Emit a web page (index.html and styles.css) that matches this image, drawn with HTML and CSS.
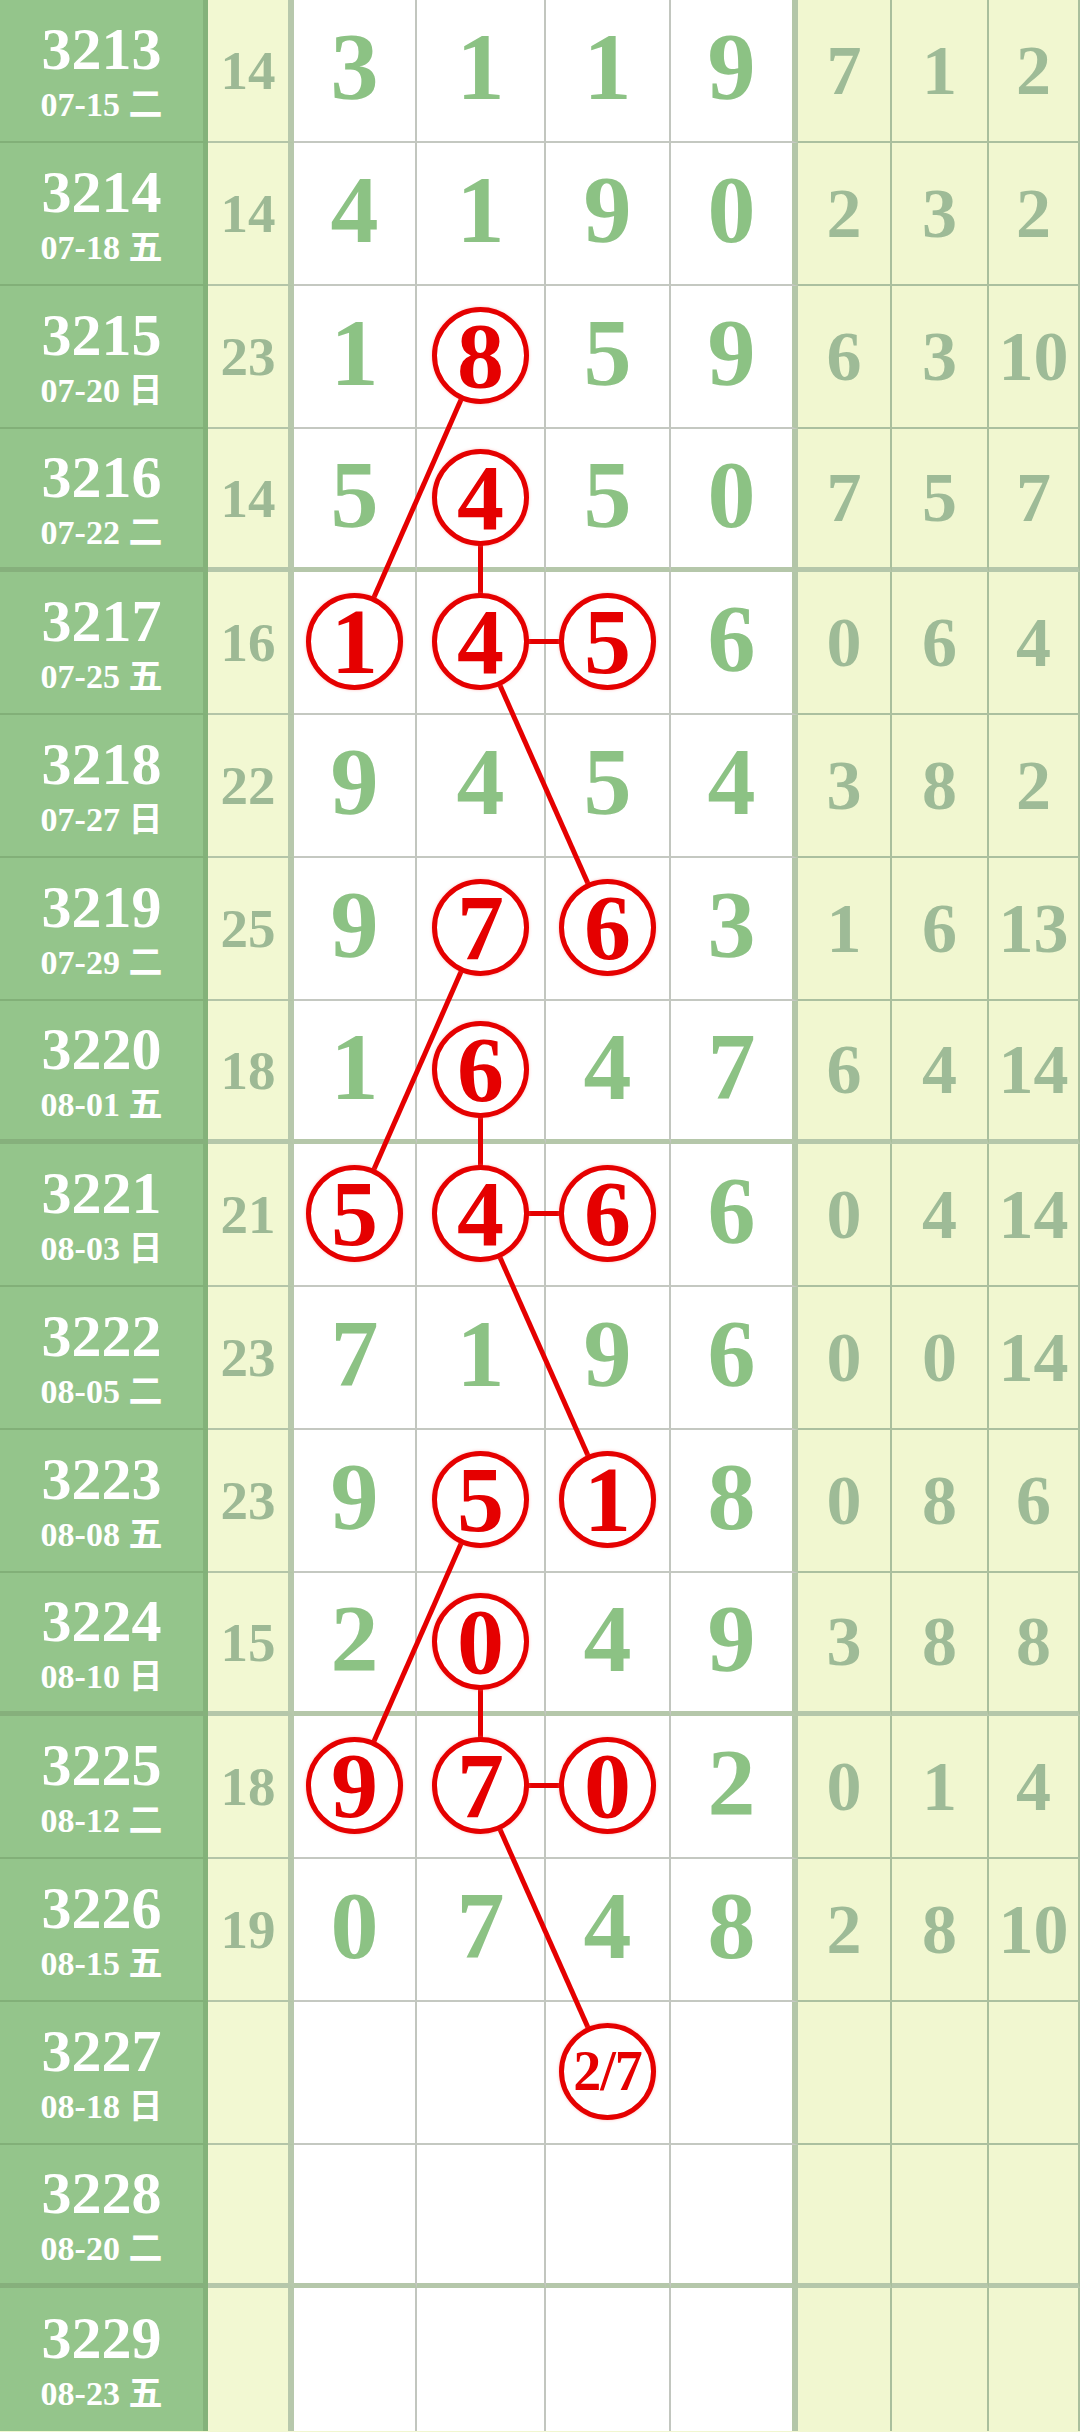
FILE: index.html
```html
<!DOCTYPE html>
<html lang="zh">
  <head>
    <meta charset="UTF-8" />
    <meta name="viewport" content="width=device-width, initial-scale=1.0" />
    <title>走势图</title>
    <link rel="stylesheet" href="styles.css">
  </head>
  <body>
    <div class="chart">
      <svg class="links" width="1080" height="2431" viewBox="0 0 1080 2431">
        <g stroke="#e50000" stroke-width="5" fill="none">
          <line x1="480.5" y1="355.5" x2="354.5" y2="641.5" />
          <line x1="480.5" y1="497" x2="480.5" y2="641.5" />
          <line x1="480.5" y1="641.5" x2="607.5" y2="641.5" />
          <line x1="480.5" y1="641.5" x2="607.5" y2="927.5" />
          <line x1="480.5" y1="927.5" x2="354.5" y2="1213.5" />
          <line x1="480.5" y1="1069" x2="480.5" y2="1213.5" />
          <line x1="480.5" y1="1213.5" x2="607.5" y2="1213.5" />
          <line x1="480.5" y1="1213.5" x2="607.5" y2="1499.5" />
          <line x1="480.5" y1="1499.5" x2="354.5" y2="1785.5" />
          <line x1="480.5" y1="1641" x2="480.5" y2="1785.5" />
          <line x1="480.5" y1="1785.5" x2="607.5" y2="1785.5" />
          <line x1="480.5" y1="1785.5" x2="607.5" y2="2071.5" />
        </g>
      </svg>

      <div class="row">
        <div class="issue"><b>3213</b><span>07-15 二</span></div>
        <div class="sum">14</div>
        <div class="d">3</div><div class="d">1</div><div class="d">1</div><div class="d">9</div>
        <div class="w">7</div><div class="w">1</div><div class="w">2</div>
      </div>
      <div class="row">
        <div class="issue"><b>3214</b><span>07-18 五</span></div>
        <div class="sum">14</div>
        <div class="d">4</div><div class="d">1</div><div class="d">9</div><div class="d">0</div>
        <div class="w">2</div><div class="w">3</div><div class="w">2</div>
      </div>
      <div class="row">
        <div class="issue"><b>3215</b><span>07-20 日</span></div>
        <div class="sum">23</div>
        <div class="d">1</div><div class="d"><span class="ball">8</span></div><div class="d">5</div><div class="d">9</div>
        <div class="w">6</div><div class="w">3</div><div class="w">10</div>
      </div>
      <div class="row row--sep">
        <div class="issue"><b>3216</b><span>07-22 二</span></div>
        <div class="sum">14</div>
        <div class="d">5</div><div class="d"><span class="ball">4</span></div><div class="d">5</div><div class="d">0</div>
        <div class="w">7</div><div class="w">5</div><div class="w">7</div>
      </div>

      <div class="row">
        <div class="issue"><b>3217</b><span>07-25 五</span></div>
        <div class="sum">16</div>
        <div class="d"><span class="ball">1</span></div><div class="d"><span class="ball">4</span></div><div class="d"><span class="ball">5</span></div><div class="d">6</div>
        <div class="w">0</div><div class="w">6</div><div class="w">4</div>
      </div>
      <div class="row">
        <div class="issue"><b>3218</b><span>07-27 日</span></div>
        <div class="sum">22</div>
        <div class="d">9</div><div class="d">4</div><div class="d">5</div><div class="d">4</div>
        <div class="w">3</div><div class="w">8</div><div class="w">2</div>
      </div>
      <div class="row">
        <div class="issue"><b>3219</b><span>07-29 二</span></div>
        <div class="sum">25</div>
        <div class="d">9</div><div class="d"><span class="ball">7</span></div><div class="d"><span class="ball">6</span></div><div class="d">3</div>
        <div class="w">1</div><div class="w">6</div><div class="w">13</div>
      </div>
      <div class="row row--sep">
        <div class="issue"><b>3220</b><span>08-01 五</span></div>
        <div class="sum">18</div>
        <div class="d">1</div><div class="d"><span class="ball">6</span></div><div class="d">4</div><div class="d">7</div>
        <div class="w">6</div><div class="w">4</div><div class="w">14</div>
      </div>

      <div class="row">
        <div class="issue"><b>3221</b><span>08-03 日</span></div>
        <div class="sum">21</div>
        <div class="d"><span class="ball">5</span></div><div class="d"><span class="ball">4</span></div><div class="d"><span class="ball">6</span></div><div class="d">6</div>
        <div class="w">0</div><div class="w">4</div><div class="w">14</div>
      </div>
      <div class="row">
        <div class="issue"><b>3222</b><span>08-05 二</span></div>
        <div class="sum">23</div>
        <div class="d">7</div><div class="d">1</div><div class="d">9</div><div class="d">6</div>
        <div class="w">0</div><div class="w">0</div><div class="w">14</div>
      </div>
      <div class="row">
        <div class="issue"><b>3223</b><span>08-08 五</span></div>
        <div class="sum">23</div>
        <div class="d">9</div><div class="d"><span class="ball">5</span></div><div class="d"><span class="ball">1</span></div><div class="d">8</div>
        <div class="w">0</div><div class="w">8</div><div class="w">6</div>
      </div>
      <div class="row row--sep">
        <div class="issue"><b>3224</b><span>08-10 日</span></div>
        <div class="sum">15</div>
        <div class="d">2</div><div class="d"><span class="ball">0</span></div><div class="d">4</div><div class="d">9</div>
        <div class="w">3</div><div class="w">8</div><div class="w">8</div>
      </div>

      <div class="row">
        <div class="issue"><b>3225</b><span>08-12 二</span></div>
        <div class="sum">18</div>
        <div class="d"><span class="ball">9</span></div><div class="d"><span class="ball">7</span></div><div class="d"><span class="ball">0</span></div><div class="d">2</div>
        <div class="w">0</div><div class="w">1</div><div class="w">4</div>
      </div>
      <div class="row">
        <div class="issue"><b>3226</b><span>08-15 五</span></div>
        <div class="sum">19</div>
        <div class="d">0</div><div class="d">7</div><div class="d">4</div><div class="d">8</div>
        <div class="w">2</div><div class="w">8</div><div class="w">10</div>
      </div>
      <div class="row">
        <div class="issue"><b>3227</b><span>08-18 日</span></div>
        <div class="sum"></div>
        <div class="d"></div><div class="d"></div><div class="d"><span class="ball ball--pair">2/7</span></div><div class="d"></div>
        <div class="w"></div><div class="w"></div><div class="w"></div>
      </div>
      <div class="row row--sep">
        <div class="issue"><b>3228</b><span>08-20 二</span></div>
        <div class="sum"></div>
        <div class="d"></div><div class="d"></div><div class="d"></div><div class="d"></div>
        <div class="w"></div><div class="w"></div><div class="w"></div>
      </div>

      <div class="row row--last">
        <div class="issue"><b>3229</b><span>08-23 五</span></div>
        <div class="sum"></div>
        <div class="d"></div><div class="d"></div><div class="d"></div><div class="d"></div>
        <div class="w"></div><div class="w"></div><div class="w"></div>
      </div>
    </div>
  </body>
</html>
```

FILE: styles.css
```css
* {
  box-sizing: border-box;
}

body {
  margin: 0;
  background: #f1f7d0;
  font-family: "Liberation Serif", "Noto Sans CJK SC", serif;
  font-weight: bold;
}

.chart {
  position: relative;
  width: 1080px;
}

.links {
  position: absolute;
  top: 0;
  left: 0;
  z-index: 1;
  pointer-events: none;
}

.row {
  display: grid;
  grid-template-columns: 208px 86px 123px 129px 125px 127px 94px 97px 91px;
  height: 143px;
}

.row > div {
  display: flex;
  align-items: center;
  justify-content: center;
  border-bottom: 2px solid #c4c8c1;
  border-right: 2px solid #c2c6bf;
}

/* issue + date */
.issue {
  flex-direction: column;
  background: #94c58b;
  color: #fff;
  border-right: 5px solid #84b27a !important;
  border-bottom-color: #82b078 !important;
}

.issue b {
  font-size: 60px;
  line-height: 60px;
}

.issue span {
  margin-top: 9px;
  font-size: 34px;
  line-height: 34px;
}

/* sum */
.sum {
  background: #f2f8d2;
  color: #9db995;
  font-size: 55px;
  line-height: 55px;
  border-right: 6px solid #b7c8ac !important;
  border-bottom-color: #b4c5a8 !important;
}

/* winning digits */
.d {
  background: #fff;
  color: #8cc284;
  font-size: 96px;
  line-height: 96px;
  padding-bottom: 7px;
}

.d:nth-child(6) {
  border-right: 6px solid #b3c6a8 !important;
}

/* right block */
.w {
  background: #f1f7d0;
  color: #9ebb97;
  font-size: 70px;
  line-height: 70px;
  border-right-color: #a9bf9d !important;
  border-bottom-color: #abc09f !important;
}

.row--sep > div {
  border-bottom: 5px solid #b5c7aa !important;
}

.row--sep > .issue {
  border-bottom-color: #86b07c !important;
}

.row--last > div {
  border-bottom: 0 !important;
}

.ball {
  position: relative;
  z-index: 2;
  width: 97px;
  height: 97px;
  margin-top: 5px;
  border: 5px solid #e50000;
  border-radius: 50%;
  background: #fff;
  color: #e50000;
  font-size: 94px;
  line-height: 87px;
  text-align: center;
  box-shadow: 0 0 3px rgba(255, 120, 120, 0.5);
}

.ball--pair {
  font-size: 56px;
  letter-spacing: -1px;
}
```
